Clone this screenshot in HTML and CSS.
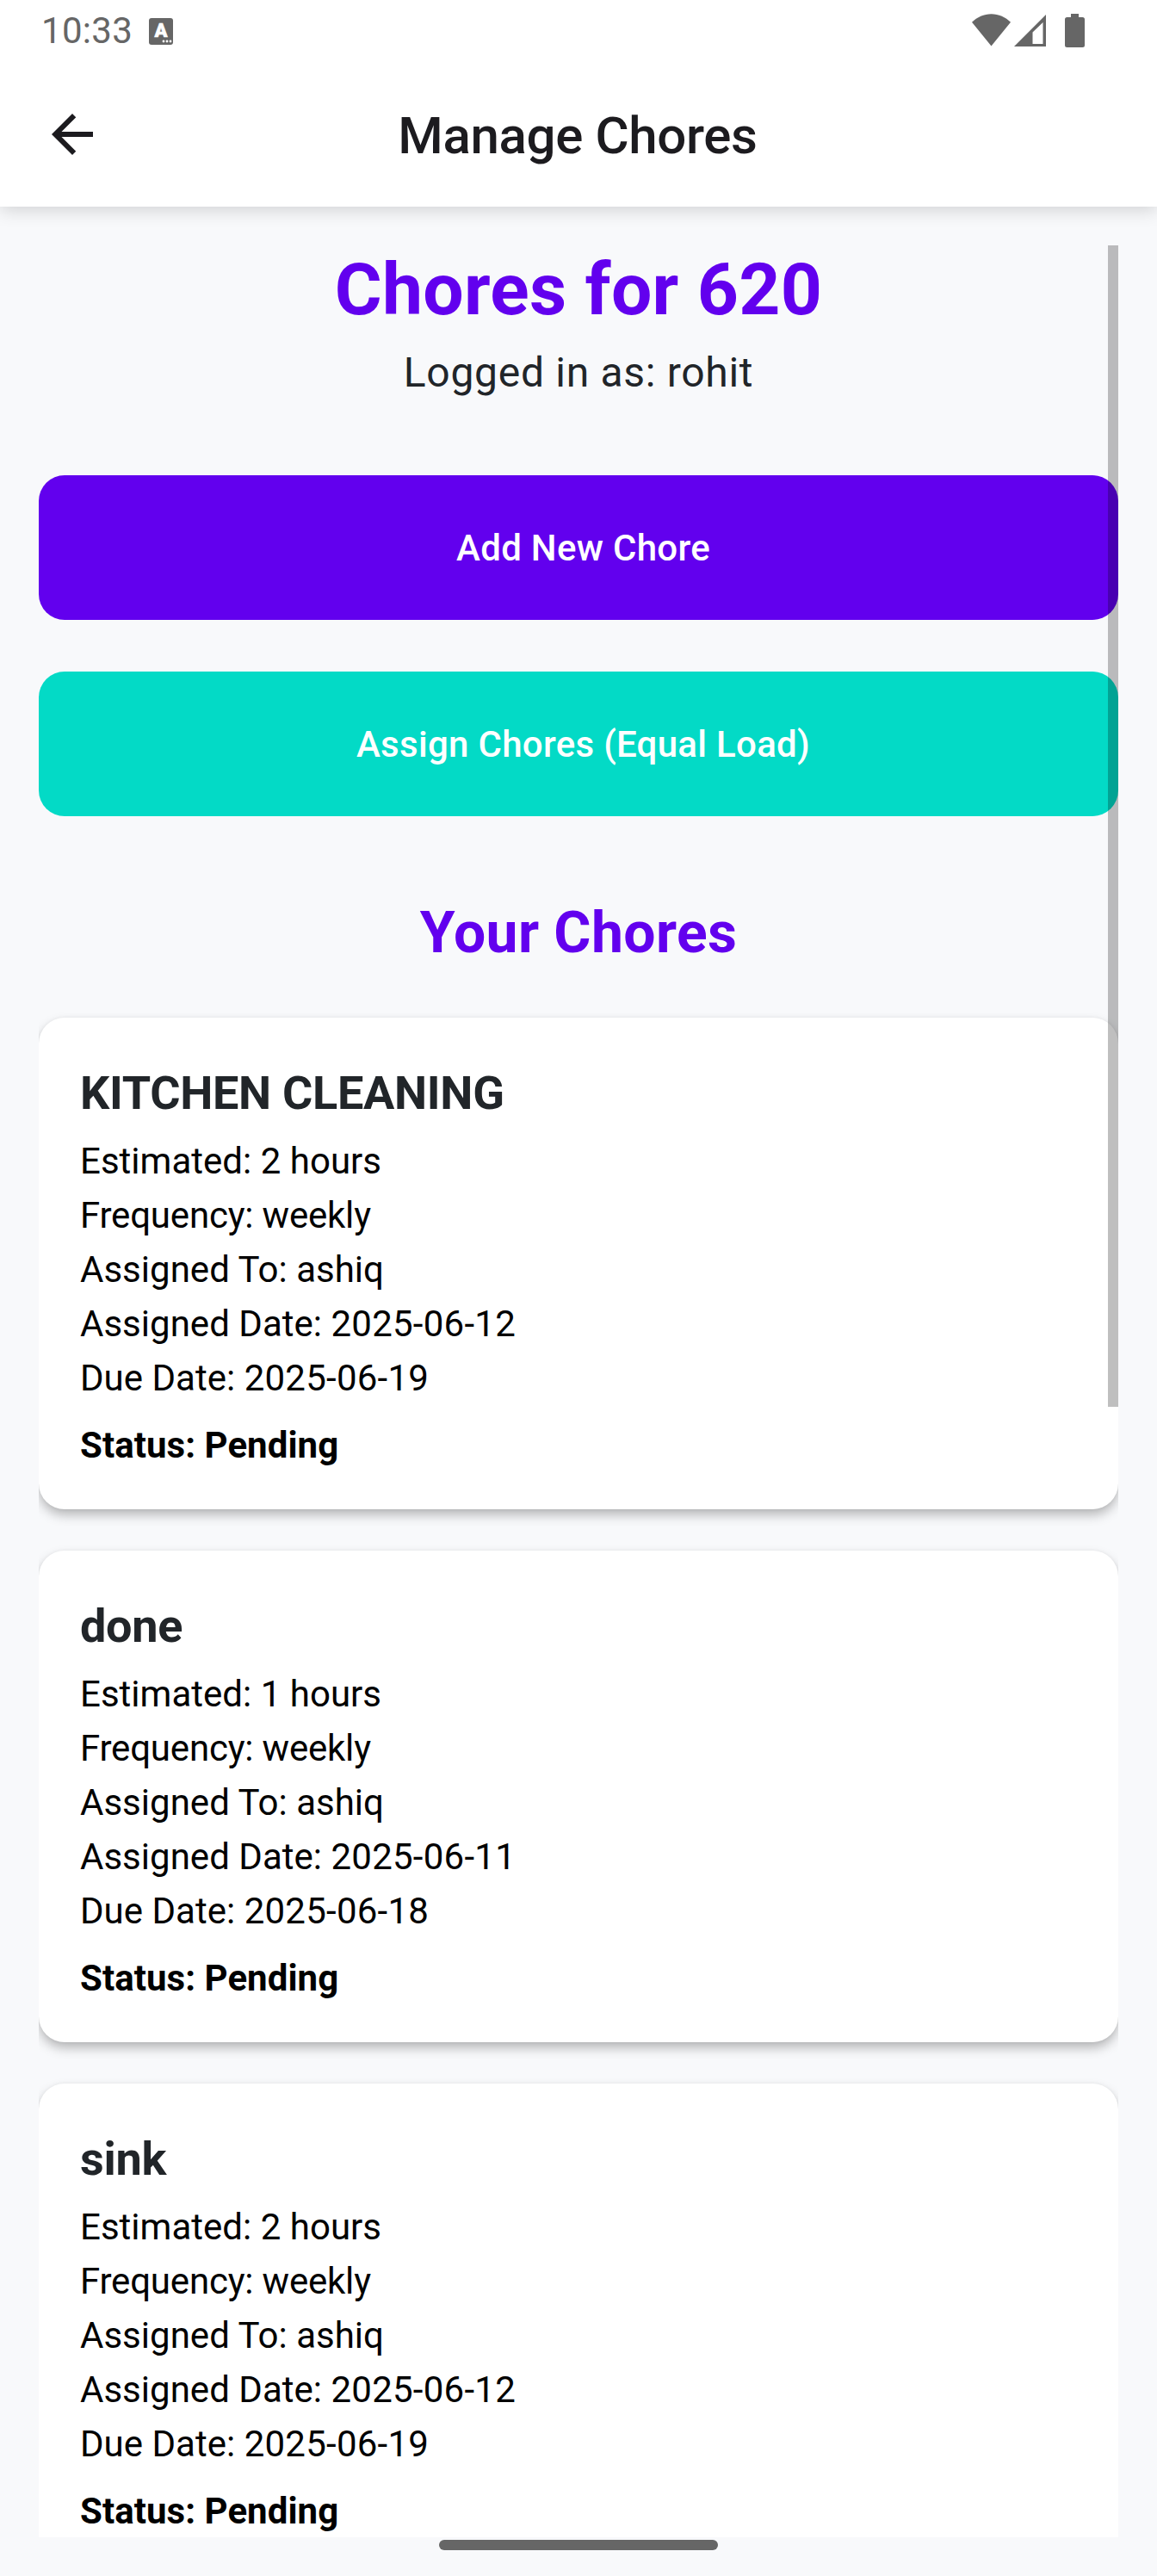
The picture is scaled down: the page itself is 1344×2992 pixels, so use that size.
FILE: index.html
```html
<!DOCTYPE html>
<html lang="en">
<head>
<meta charset="utf-8">
<title>Manage Chores</title>
<link rel="stylesheet" href="styles.css">
</head>
<body>
<div class="screen">
  <header class="top">
    <div class="status-bar">
      <span class="clock">10:33</span>
      <span class="keyboard-icon">A
        <svg class="keyboard-dots" width="12" height="4" viewBox="0 0 12 4"><g fill="#fff"><circle cx="2" cy="2" r="1.4"/><circle cx="6" cy="2" r="1.4"/><circle cx="10" cy="2" r="1.4"/></g></svg>
      </span>
      <div class="indicators">
        <svg class="wifi" width="45" height="38" viewBox="0 0 45 38"><path fill="#666" d="M22.5 37.5 0 9.8C6 4 14 .3 22.500 .3S39 4 45 9.800z"/></svg>
        <svg class="signal" width="38" height="38" viewBox="0 0 38 38"><path fill="#666" fill-rule="evenodd" d="M0 38 37 1v37zM21.500 21.500V35H33.500V10z"/></svg>
        <svg class="battery" width="23" height="39" viewBox="0 0 23 39"><path fill="#666" d="M7 0h9v4h4.500Q23 4 23 6.500v30Q23 39 20.500 39h-18Q0 39 0 36.500v-30Q0 4 2.500 4H7z"/></svg>
      </div>
    </div>
    <div class="app-bar">
      <svg class="back" width="72" height="72" viewBox="0 0 24 24"><path fill="#1c1b1f" d="M20 11H7.830l5.590-5.590L12 4l-8 8 8 8 1.410-1.410L7.830 13H20z"/></svg>
      <div class="app-title">Manage Chores</div>
    </div>
  </header>
  <main class="scroll">
    <h1 class="heading">Chores for 620</h1>
    <p class="user">Logged in as: rohit</p>
    <div class="actions">
      <button class="button button-add">Add New Chore</button>
      <button class="button button-assign">Assign Chores (Equal Load)</button>
    </div>
    <h2 class="section">Your Chores</h2>
    <div class="list">
      <article class="card">
        <h3 class="name">KITCHEN CLEANING</h3>
        <p>Estimated: 2 hours</p>
        <p class="frequency">Frequency: weekly</p>
        <p>Assigned To: ashiq</p>
        <p>Assigned Date: <time>2025-06-12</time></p>
        <p>Due Date: <time>2025-06-19</time></p>
        <p class="state">Status: Pending</p>
      </article>
      <article class="card">
        <h3 class="name">done</h3>
        <p>Estimated: 1 hours</p>
        <p class="frequency">Frequency: weekly</p>
        <p>Assigned To: ashiq</p>
        <p>Assigned Date: <time>2025-06-11</time></p>
        <p>Due Date: <time>2025-06-18</time></p>
        <p class="state">Status: Pending</p>
      </article>
      <article class="card">
        <h3 class="name">sink</h3>
        <p>Estimated: 2 hours</p>
        <p class="frequency">Frequency: weekly</p>
        <p>Assigned To: ashiq</p>
        <p>Assigned Date: <time>2025-06-12</time></p>
        <p>Due Date: <time>2025-06-19</time></p>
        <p class="state">Status: Pending</p>
      </article>
    </div>
    <div class="scrollbar"></div>
  </main>
  <div class="nav-pill"></div>
</div>
</body>
</html>
```
FILE: styles.css
```css
* { box-sizing: border-box; }

body {
  margin: 0;
  font-family: Roboto, sans-serif;
  color: #000;
  background: #f8f9fb;
}

h1, h2, h3, p { margin: 0; }

.screen {
  display: flex;
  flex-direction: column;
  width: 1344px;
  height: 2992px;
  overflow: hidden;
}

.top {
  flex: none;
  height: 240px;
  background: #fff;
  box-shadow: 0 4px 20px rgba(0, 0, 0, .16);
}

.status-bar {
  display: flex;
  align-items: flex-start;
  height: 72px;
  padding: 0 84px 0 48px;
}

.clock {
  margin-top: 11px;
  font-size: 42px;
  line-height: 49px;
  letter-spacing: .3px;
  color: #666;
}

.keyboard-icon {
  position: relative;
  width: 28px;
  height: 31px;
  margin: 21px 0 0 19px;
  border-radius: 3px;
  background: #666;
  color: #fff;
  font-size: 22px;
  font-weight: 900;
  line-height: 29px;
  text-align: center;
  -webkit-text-stroke: .6px #fff;
}

.keyboard-dots { position: absolute; right: 1px; bottom: 2px; }

.indicators { display: flex; margin-left: auto; padding-top: 16px; }
.signal { margin-left: 4px; }
.battery { margin-left: 21px; }

.app-bar {
  display: grid;
  grid-template-columns: 72px 1fr 72px;
  align-items: center;
  height: 168px;
  padding: 0 48px;
}

.app-title {
  padding: 3px 2px 0 0;
  font-size: 60px;
  font-weight: 500;
  line-height: 72px;
  letter-spacing: -.35px;
  text-align: center;
  color: #1c1b1f;
}

.scroll {
  position: relative;
  flex: none;
  height: 2662px;
  margin: 45px 45px 0;
  padding-top: 2px;
  overflow: hidden;
}

.heading {
  font-size: 84px;
  font-weight: 700;
  line-height: 100px;
  letter-spacing: .3px;
  text-align: center;
  color: #6200ee;
}

.user {
  margin-top: 10px;
  font-size: 48px;
  line-height: 72px;
  letter-spacing: .7px;
  text-align: center;
  color: #212529;
}

.actions {
  display: flex;
  flex-direction: column;
  gap: 60px;
  margin-top: 83px;
}

.button {
  height: 168px;
  padding: 0 0 0 11px;
  border: 0;
  border-radius: 30px;
  font: 500 42px/63px Roboto, sans-serif;
  letter-spacing: .3px;
  color: #fff;
}

.button-add { background: #6200ee; }
.button-assign { background: #03dac6; }

.section {
  margin-top: 97px;
  font-size: 66px;
  font-weight: 700;
  line-height: 78px;
  letter-spacing: .4px;
  text-align: center;
  color: #6200ee;
}

.list {
  display: flex;
  flex-direction: column;
  gap: 48px;
  margin-top: 59px;
}

.card {
  height: 571px;
  padding: 48px;
  border-radius: 30px;
  background: #fff;
  box-shadow: 0 7px 14px -1px rgba(0, 0, 0, .29), 0 0 4px rgba(0, 0, 0, .05);
  font-size: 42px;
  line-height: 63px;
  letter-spacing: .02px;
}

.card time { letter-spacing: .25px; }

.frequency { letter-spacing: -.2px; }

.name {
  margin-bottom: 8px;
  font-size: 54px;
  font-weight: 700;
  line-height: 79px;
  letter-spacing: -.3px;
  color: #212529;
}

.state { margin-top: 15px; font-weight: 700; letter-spacing: .05px; }

.scrollbar {
  position: absolute;
  top: 0;
  right: 0;
  width: 12px;
  height: 1349px;
  background: rgba(0, 0, 0, .25);
}

.nav-pill {
  flex: none;
  width: 324px;
  height: 12px;
  margin: 3px auto 0;
  border-radius: 6px;
  background: #666;
}
```
